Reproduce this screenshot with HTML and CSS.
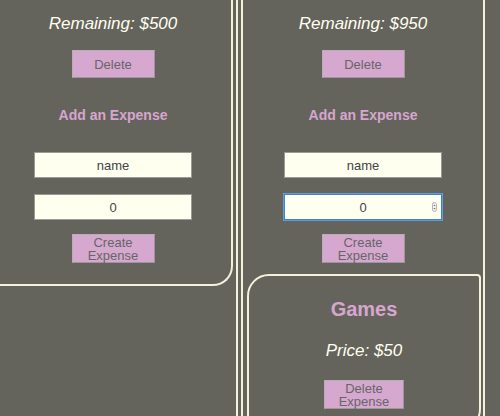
FILE: index.html
```html
<!DOCTYPE html>
<html lang="en">
<head>
<meta charset="utf-8">
<title>Budgets</title>
<link rel="stylesheet" href="styles.css">
</head>
<body>
<div class="board">
  <section class="column column-left">
    <div class="budget-card">
      <p class="remaining">Remaining: $500</p>
      <button class="btn btn-delete">Delete</button>
      <h4 class="form-title">Add an Expense</h4>
      <div class="field field-first"><input class="input" type="text" value="name"></div>
      <div class="field"><input class="input" type="text" value="0"></div>
      <button class="btn btn-create">Create Expense</button>
    </div>
  </section>
  <section class="column column-right">
    <p class="remaining">Remaining: $950</p>
    <button class="btn btn-delete">Delete</button>
    <h4 class="form-title">Add an Expense</h4>
    <div class="field field-first"><input class="input" type="text" value="name"></div>
    <div class="field"><input class="input input-focused" type="text" value="0">
      <svg class="spinner" width="5" height="10" viewBox="0 0 5 10"><rect x="0.5" y="0.5" width="4" height="9" rx="2" fill="#f2f2f2" stroke="#b5b5b5"/><path d="M1.3 4 L2.5 2.4 L3.7 4 Z M1.3 6 L2.5 7.6 L3.7 6 Z" fill="#777"/></svg>
    </div>
    <button class="btn btn-create">Create Expense</button>
    <div class="expense-card">
      <h3 class="expense-name">Games</h3>
      <p class="price">Price: $50</p>
      <button class="btn btn-expense-delete">Delete Expense</button>
    </div>
  </section>
</div>
</body>
</html>
```

FILE: styles.css
```css
html, body {
  margin: 0;
  padding: 0;
  height: 416px;
  overflow: hidden;
  background: #65645c;
  font-family: "Liberation Sans", Arial, sans-serif;
}

.board {
  display: flex;
  align-items: stretch;
  gap: 3px;
  margin-left: -9px;
  min-height: 460px;
}

.column {
  display: flex;
  flex-direction: column;
  align-items: center;
  box-sizing: border-box;
}

.column-left {
  width: 247px;
  border-right: 2px solid #f3f0dc;
  align-items: flex-start;
  padding-left: 2px;
}

.column-right {
  width: 244px;
  border-left: 2px solid #f3f0dc;
  border-right: 2px solid #f3f0dc;
}

.budget-card {
  width: 240px;
  box-sizing: border-box;
  border-right: 2px solid #f3f0dc;
  border-bottom: 2px solid #f3f0dc;
  border-bottom-right-radius: 20px;
  padding: 0 0 21px 2px;
  display: flex;
  flex-direction: column;
  align-items: center;
}

.remaining {
  margin: 14px 0 0;
  font-size: 17px;
  line-height: 20px;
  font-style: italic;
  color: #fffff2;
}

.btn {
  font-family: "Liberation Sans", Arial, sans-serif;
  font-size: 13px;
  line-height: 13px;
  color: #666;
  background: #d6a8d0;
  border: 1px solid #9c979a;
  border-top-color: #b6afb3;
  border-left-color: #b6afb3;
  padding: 0 6px;
  box-sizing: border-box;
  width: 83px;
}

.btn-delete {
  margin-top: 16px;
  height: 28px;
}

.form-title {
  margin: 29px 0 0;
  font-size: 14px;
  line-height: 16px;
  font-weight: bold;
  color: #d6a6cf;
}

.field {
  position: relative;
  margin-top: 16px;
}

.field-first {
  margin-top: 29px;
}

.input {
  display: block;
  width: 158px;
  height: 26px;
  box-sizing: border-box;
  border: 1px solid #9a9a96;
  background: #fffff0;
  font-family: "Liberation Sans", Arial, sans-serif;
  font-size: 13px;
  color: #444;
  text-align: center;
  padding: 0 4px;
  outline: none;
}

.input-focused {
  border: 1px solid #3f82cf;
  box-shadow: 0 0 0 1px #5f9de0;
}

.spinner {
  position: absolute;
  right: 5px;
  top: 8px;
}

.btn-create {
  margin-top: 14px;
  height: 29px;
}

.expense-card {
  align-self: stretch;
  margin: 11px 2px 0 4px;
  border: 2px solid #f3f0dc;
  border-radius: 22px 4px 22px 4px;
  display: flex;
  flex-direction: column;
  align-items: center;
  padding-bottom: 20px;
}

.expense-name {
  margin: 21px 0 0;
  font-size: 20px;
  line-height: 24px;
  font-weight: bold;
  color: #d6a6cf;
}

.price {
  margin: 20px 0 0;
  font-size: 17px;
  line-height: 20px;
  font-style: italic;
  color: #fffff2;
}

.btn-expense-delete {
  margin-top: 19px;
  width: 80px;
  height: 29px;
}
```
